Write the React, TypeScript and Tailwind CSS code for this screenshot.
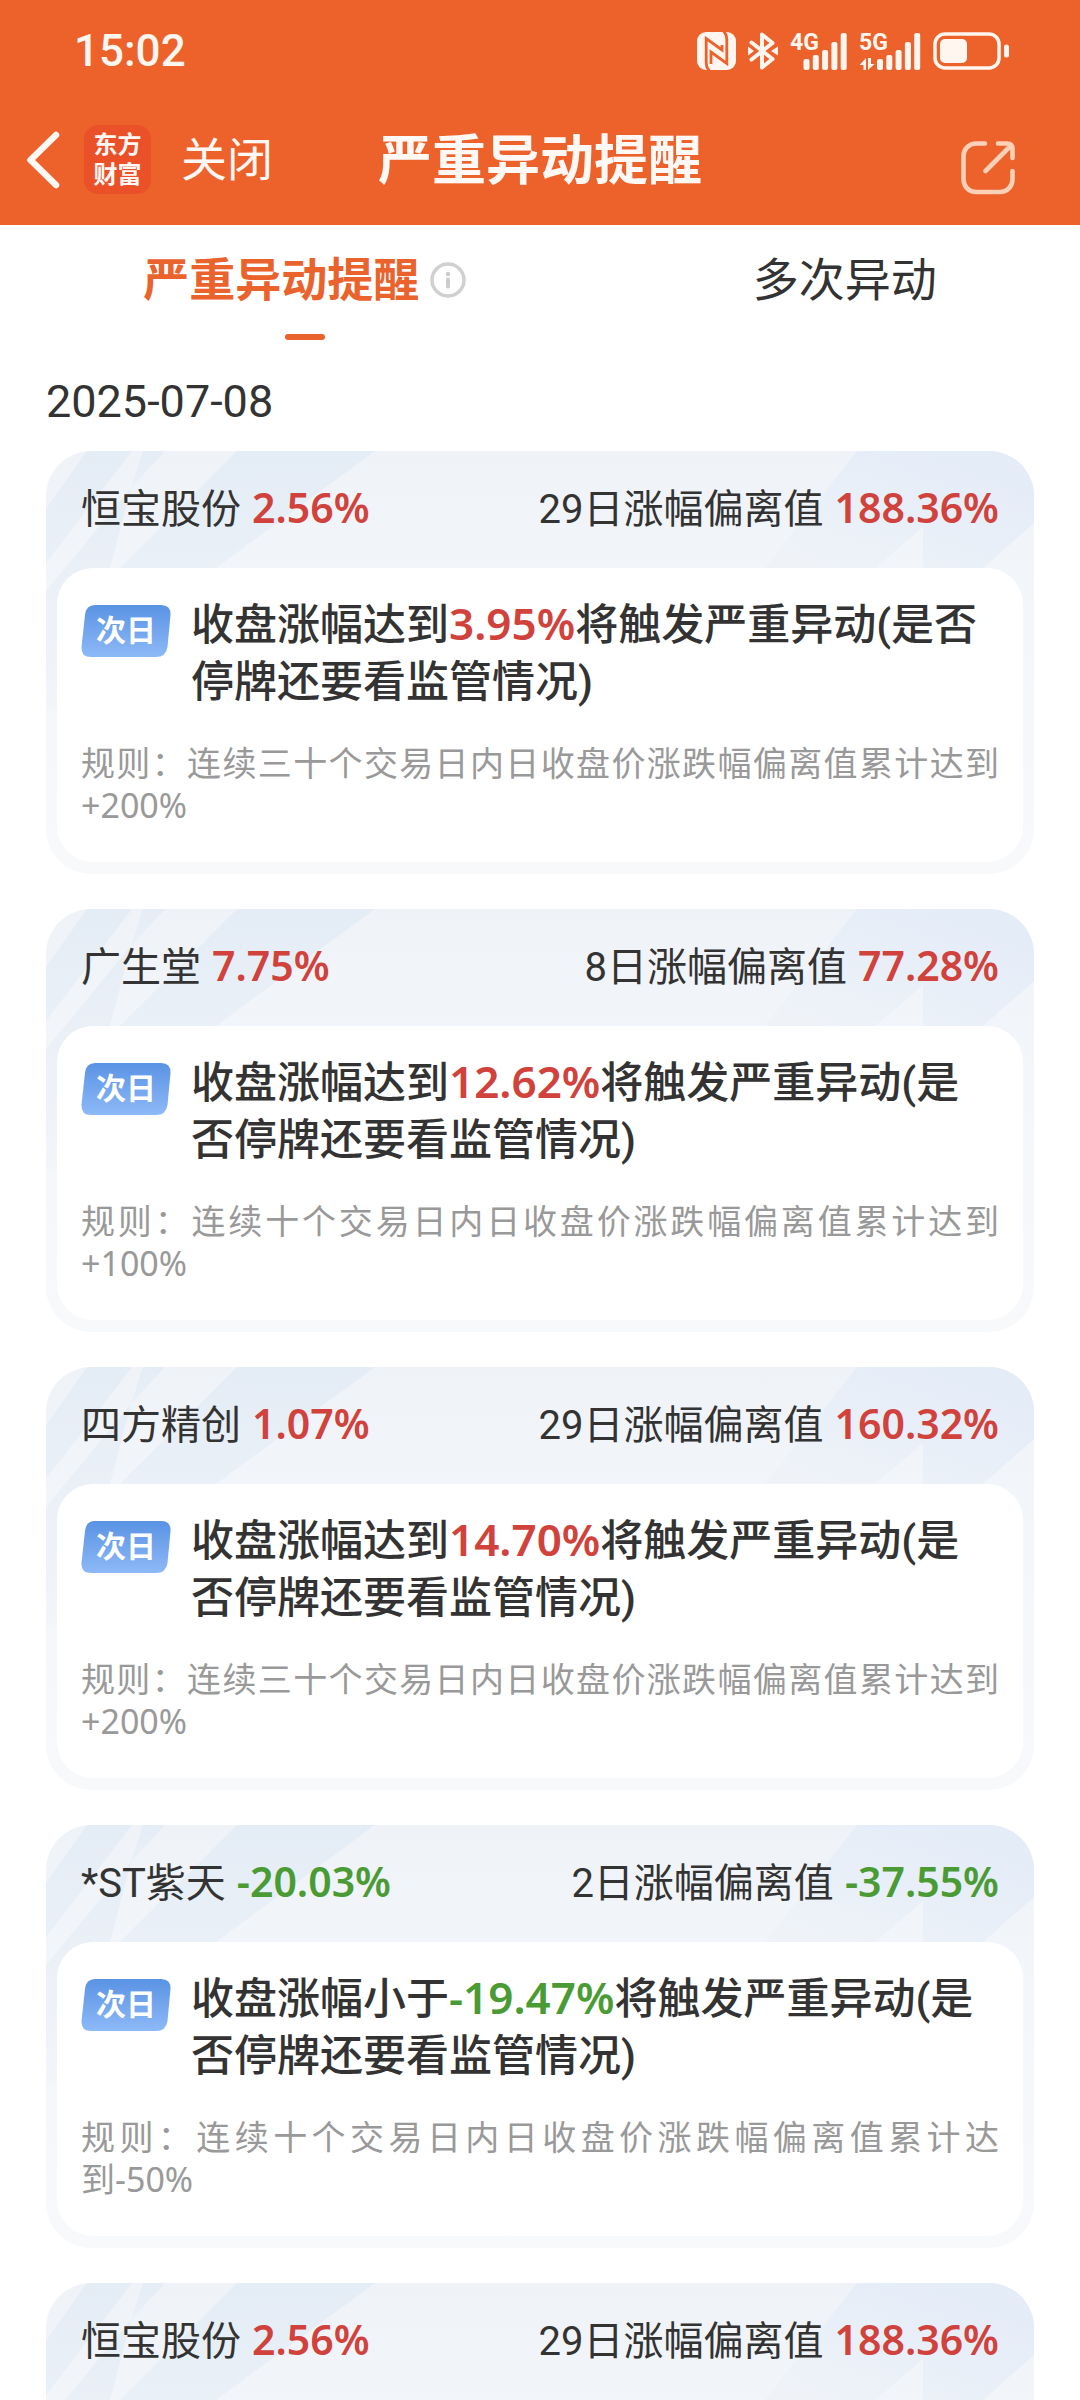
import { useState } from "react";

type Notice = {
  name: string;
  change: string;
  days: number;
  deviation: string;
  verb: string;
  trigger: string;
  rule: string;
  falling?: boolean;
};

const NOTICES: Notice[] = [
  {
    name: "恒宝股份",
    change: "2.56%",
    days: 29,
    deviation: "188.36%",
    verb: "达到",
    trigger: "3.95%",
    rule: "连续三十个交易日内日收盘价涨跌幅偏离值累计达到+200%",
  },
  {
    name: "广生堂",
    change: "7.75%",
    days: 8,
    deviation: "77.28%",
    verb: "达到",
    trigger: "12.62%",
    rule: "连续十个交易日内日收盘价涨跌幅偏离值累计达到+100%",
  },
  {
    name: "四方精创",
    change: "1.07%",
    days: 29,
    deviation: "160.32%",
    verb: "达到",
    trigger: "14.70%",
    rule: "连续三十个交易日内日收盘价涨跌幅偏离值累计达到+200%",
  },
  {
    name: "*ST紫天",
    change: "-20.03%",
    days: 2,
    deviation: "-37.55%",
    verb: "小于",
    trigger: "-19.47%",
    rule: "连续十个交易日内日收盘价涨跌幅偏离值累计达到-50%",
    falling: true,
  },
  {
    name: "恒宝股份",
    change: "2.56%",
    days: 29,
    deviation: "188.36%",
    verb: "达到",
    trigger: "3.95%",
    rule: "连续三十个交易日内日收盘价涨跌幅偏离值累计达到+200%",
  },
];

function NfcIcon() {
  return (
    <svg width="39" height="38" viewBox="0 0 39 38" aria-hidden="true">
      <rect width="39" height="38" rx="9" fill="#fff6f0" />
      <g fill="none" stroke="#ed622b" strokeWidth="2.800" strokeLinejoin="miter">
        <path d="M13 39.500Q9.200 36 9.200 31V6.500L25 18V13" />
        <path d="M26 -1.500Q29.800 2 29.800 7V31.500L14 20V32" />
      </g>
    </svg>
  );
}

function BluetoothIcon() {
  return (
    <svg width="30" height="38" viewBox="0 0 30 38" aria-hidden="true">
      <path
        d="M3.500 10.500L24.500 27L14 35.500V2.500L24.500 11L3.500 27.500"
        fill="none"
        stroke="#fff6f0"
        strokeWidth="4"
        strokeLinecap="round"
        strokeLinejoin="round"
      />
      <path d="M0 14.500L6 19L0 23.500ZM30 14.500L23 19L30 23.500Z" fill="#fff6f0" />
    </svg>
  );
}

function Bars({ x }: { x: number }) {
  const tops = [27, 23, 18, 10, 1];
  return (
    <g fill="#fff6f0">
      {tops.map((top, i) => (
        <rect key={top} x={x + i * 9.3} y={top} width="6" height={38 - top} rx="2" />
      ))}
    </g>
  );
}

function SignalIcon({ label, active }: { label: string; active?: boolean }) {
  return (
    <svg
      width={active ? 62 : 57}
      height="50"
      viewBox={active ? "0 -6 62 50" : "0 -6 57 50"}
      role="img"
      aria-label={label}
    >
      <text x="0" y="18" fontSize="23" fontWeight="700" fill="#fff6f0" fontFamily="Roboto, sans-serif">
        {label}
      </text>
      {active && (
        <path d="M0.500 33L7 26V38H4.500V33ZM9 26V38L15.500 32H12V26Z" fill="#fff6f0" />
      )}
      <Bars x={active ? 18 : 13.5} />
    </svg>
  );
}

function BatteryIcon() {
  return (
    <svg width="77" height="38" viewBox="0 0 77 38" aria-hidden="true">
      <rect x="2" y="2" width="64" height="34" rx="10" fill="none" stroke="#fff6f0" strokeWidth="3.500" />
      <rect x="7" y="7" width="27" height="24" rx="5" fill="#fff6f0" />
      <rect x="71" y="12.500" width="5" height="13" rx="2.500" fill="#fff6f0" />
    </svg>
  );
}

function StatusBar() {
  return (
    <div className="flex h-[102px] items-center justify-between pl-[74px] pr-[70px]">
      <span className="font-['Roboto',sans-serif] text-[44px] font-medium leading-[44px] text-[#fff6f0]">
        15:02
      </span>
      <div className="flex items-center gap-3">
        <NfcIcon />
        <BluetoothIcon />
        <SignalIcon label="4G" />
        <SignalIcon label="5G" active />
        <BatteryIcon />
      </div>
    </div>
  );
}

function NavBar() {
  return (
    <div className="grid h-[123px] grid-cols-[1fr_auto_1fr] items-center px-[26px] pb-1 text-[#fff8f4]">
      <div className="flex items-center pb-1">
        <button type="button" aria-label="返回" className="mr-6">
          <svg width="34" height="58" viewBox="0 0 34 58" fill="none" aria-hidden="true">
            <path
              d="M30 4L4.500 29L30 54"
              stroke="currentColor"
              strokeWidth="6.500"
              strokeLinecap="round"
              strokeLinejoin="round"
            />
          </svg>
        </button>
        <div className="mr-[30px] flex h-[69px] w-[67px] flex-col items-center justify-center rounded-[14px] bg-[#ea5129] text-[24px] font-bold leading-[30px]">
          <span>东方</span>
          <span>财富</span>
        </div>
        <button type="button" className="text-[46px] leading-[60px]">
          关闭
        </button>
      </div>
      <h1 className="text-[54px] font-bold leading-[64px]">严重异动提醒</h1>
      <button type="button" aria-label="分享" className="mr-[39px] justify-self-end pt-3">
        <svg width="54" height="54" viewBox="0 0 54 54" fill="none" aria-hidden="true">
          <g
            stroke="#fdd0b8"
            strokeWidth="4.600"
            strokeLinecap="round"
            strokeLinejoin="round"
          >
            <path d="M24 2.500H15A12.500 12.500 0 0 0 2.500 15V38.500A12.500 12.500 0 0 0 15 51H39A12.500 12.500 0 0 0 51.500 38.500V30" />
            <path d="M37 2.500H46Q51.500 2.500 51.500 8V17M50 4.500L24.500 30" />
          </g>
        </svg>
      </button>
    </div>
  );
}

function Tabs() {
  const [active, setActive] = useState(0);
  const labels = ["严重异动提醒", "多次异动"];
  return (
    <div role="tablist" className="flex justify-around pt-[23px]">
      {labels.map((label, i) => (
        <button
          key={label}
          type="button"
          role="tab"
          aria-selected={active === i}
          onClick={() => setActive(i)}
          className="group flex flex-col items-center gap-[22px] text-[46px] leading-[64px] text-[#333333] aria-selected:font-bold aria-selected:text-[#ea632d]"
        >
          <span className="flex items-center gap-[11px]">
            {label}
            {i === 0 && (
              <svg width="36" height="36" viewBox="0 0 36 36" fill="none" aria-hidden="true">
                <circle cx="18" cy="18" r="16" stroke="#d0d0d0" strokeWidth="3.500" />
                <circle cx="18" cy="12" r="2.200" fill="#cccccc" />
                <path d="M18 17.500V24.500" stroke="#cccccc" strokeWidth="4" strokeLinecap="round" />
              </svg>
            )}
          </span>
          <span className="h-[6px] w-10 rounded-[3px] group-aria-selected:bg-[#ea632d]" />
        </button>
      ))}
    </div>
  );
}

function CardBackdrop() {
  return (
    <svg
      className="absolute inset-0 h-full w-full"
      viewBox="0 0 988 423"
      preserveAspectRatio="none"
      aria-hidden="true"
    >
      <defs>
        <linearGradient id="base" x1="0" y1="0" x2="0" y2="1">
          <stop offset="0" stopColor="#eff3f8" />
          <stop offset="0.300" stopColor="#f2f5fa" />
          <stop offset="1" stopColor="#f8f9fb" />
        </linearGradient>
        <linearGradient id="left" x1="0" y1="0" x2="0" y2="1">
          <stop offset="0" stopColor="#e4ecf5" />
          <stop offset="1" stopColor="#e9f0f8" />
        </linearGradient>
        <linearGradient id="lower" x1="0" y1="0" x2="0" y2="1">
          <stop offset="0" stopColor="#e6edf5" />
          <stop offset="1" stopColor="#f2f5fa" />
        </linearGradient>
        <linearGradient id="right" x1="0" y1="0.800" x2="0.700" y2="0">
          <stop offset="0" stopColor="#eff3f8" />
          <stop offset="0.500" stopColor="#e8eff8" />
          <stop offset="1" stopColor="#e4ecf8" />
        </linearGradient>
      </defs>
      <rect width="988" height="423" fill="url(#base)" />
      <path d="M41 0H86L0 112V58Z" fill="url(#left)" />
      <path d="M97 0H119L85 37Z" fill="url(#left)" />
      <path d="M85 37L64 117L40 260H0V140Z" fill="url(#lower)" />
      <path d="M191 0H329L170 117H74Z" fill="url(#left)" />
      <path d="M811 0H988V72L937 117H877V76L829 117H719Z" fill="url(#right)" />
    </svg>
  );
}

function NextDayBadge() {
  return (
    <div className="relative mt-2 flex h-[52px] w-[90px] shrink-0 items-center justify-center">
      <svg className="absolute inset-0 h-full w-full" viewBox="0 0 90 52" aria-hidden="true">
        <defs>
          <linearGradient id="badge" x1="0" y1="0" x2="0" y2="1">
            <stop offset="0" stopColor="#5a93e4" />
            <stop offset="1" stopColor="#8db9f7" />
          </linearGradient>
        </defs>
        <path
          d="M14 0H80Q90 0 89.500 10L86.500 42Q85 52 75 52H10Q0 52 0.500 42L4 10Q5 0 14 0Z"
          fill="url(#badge)"
        />
      </svg>
      <span className="relative text-[30px] font-bold leading-[52px] text-white">次日</span>
    </div>
  );
}

function Figure({ value, falling, large }: { value: string; falling?: boolean; large?: boolean }) {
  const tone = falling ? "text-[#4b9b35]" : "text-[#d0423b]";
  const size = large ? "text-[44px]" : "text-[41px]";
  return (
    <span className={`font-['Noto_Sans',sans-serif] font-semibold leading-none ${tone} ${size}`}>
      {value}
    </span>
  );
}

function NoticeCard({ notice }: { notice: Notice }) {
  return (
    <article className="relative overflow-hidden rounded-[45px] px-[11px] pb-3">
      <CardBackdrop />
      <header className="relative flex h-[117px] items-center justify-between px-6 text-[40px] text-[#333333]">
        <div className="flex items-baseline gap-[11px]">
          <h2>{notice.name}</h2>
          <Figure value={notice.change} falling={notice.falling} />
        </div>
        <div className="flex items-baseline gap-[11px]">
          <span>{`${notice.days}日涨幅偏离值`}</span>
          <Figure value={notice.deviation} falling={notice.falling} />
        </div>
      </header>
      <div className="relative rounded-[36px] bg-white px-6 pb-9 pt-[29px]">
        <div className="flex gap-5">
          <NextDayBadge />
          <p className="flex-1 pr-1 text-[43px] font-medium leading-[57px] text-[#333333]">
            {`收盘涨幅${notice.verb}`}
            <Figure value={notice.trigger} falling={notice.falling} large />
            将触发严重异动(是否停牌还要看监管情况)
          </p>
        </div>
        <p className="mt-[31px] text-justify font-['Noto_Sans','Noto_Sans_CJK_SC',sans-serif] text-[34px] leading-[42px] text-[#999999]">
          {`规则：${notice.rule}`}
        </p>
      </div>
    </article>
  );
}

export default function App() {
  return (
    <div
      lang="zh-CN"
      className="flex h-screen flex-col overflow-hidden bg-white font-['Roboto','Noto_Sans_CJK_SC',sans-serif]"
    >
      <div className="shrink-0 bg-[#ed622b]">
        <StatusBar />
        <NavBar />
      </div>
      <main className="min-h-0 flex-1 overflow-y-auto [scrollbar-width:none]">
        <Tabs />
        <section className="px-[46px] pb-9 pt-8">
          <time dateTime="2025-07-08" className="mb-[19px] block text-[45px] leading-[60px] text-[#333333]">
            2025-07-08
          </time>
          <div className="flex flex-col gap-[35px]">
            {NOTICES.map((notice, i) => (
              <NoticeCard key={i} notice={notice} />
            ))}
          </div>
        </section>
      </main>
    </div>
  );
}
